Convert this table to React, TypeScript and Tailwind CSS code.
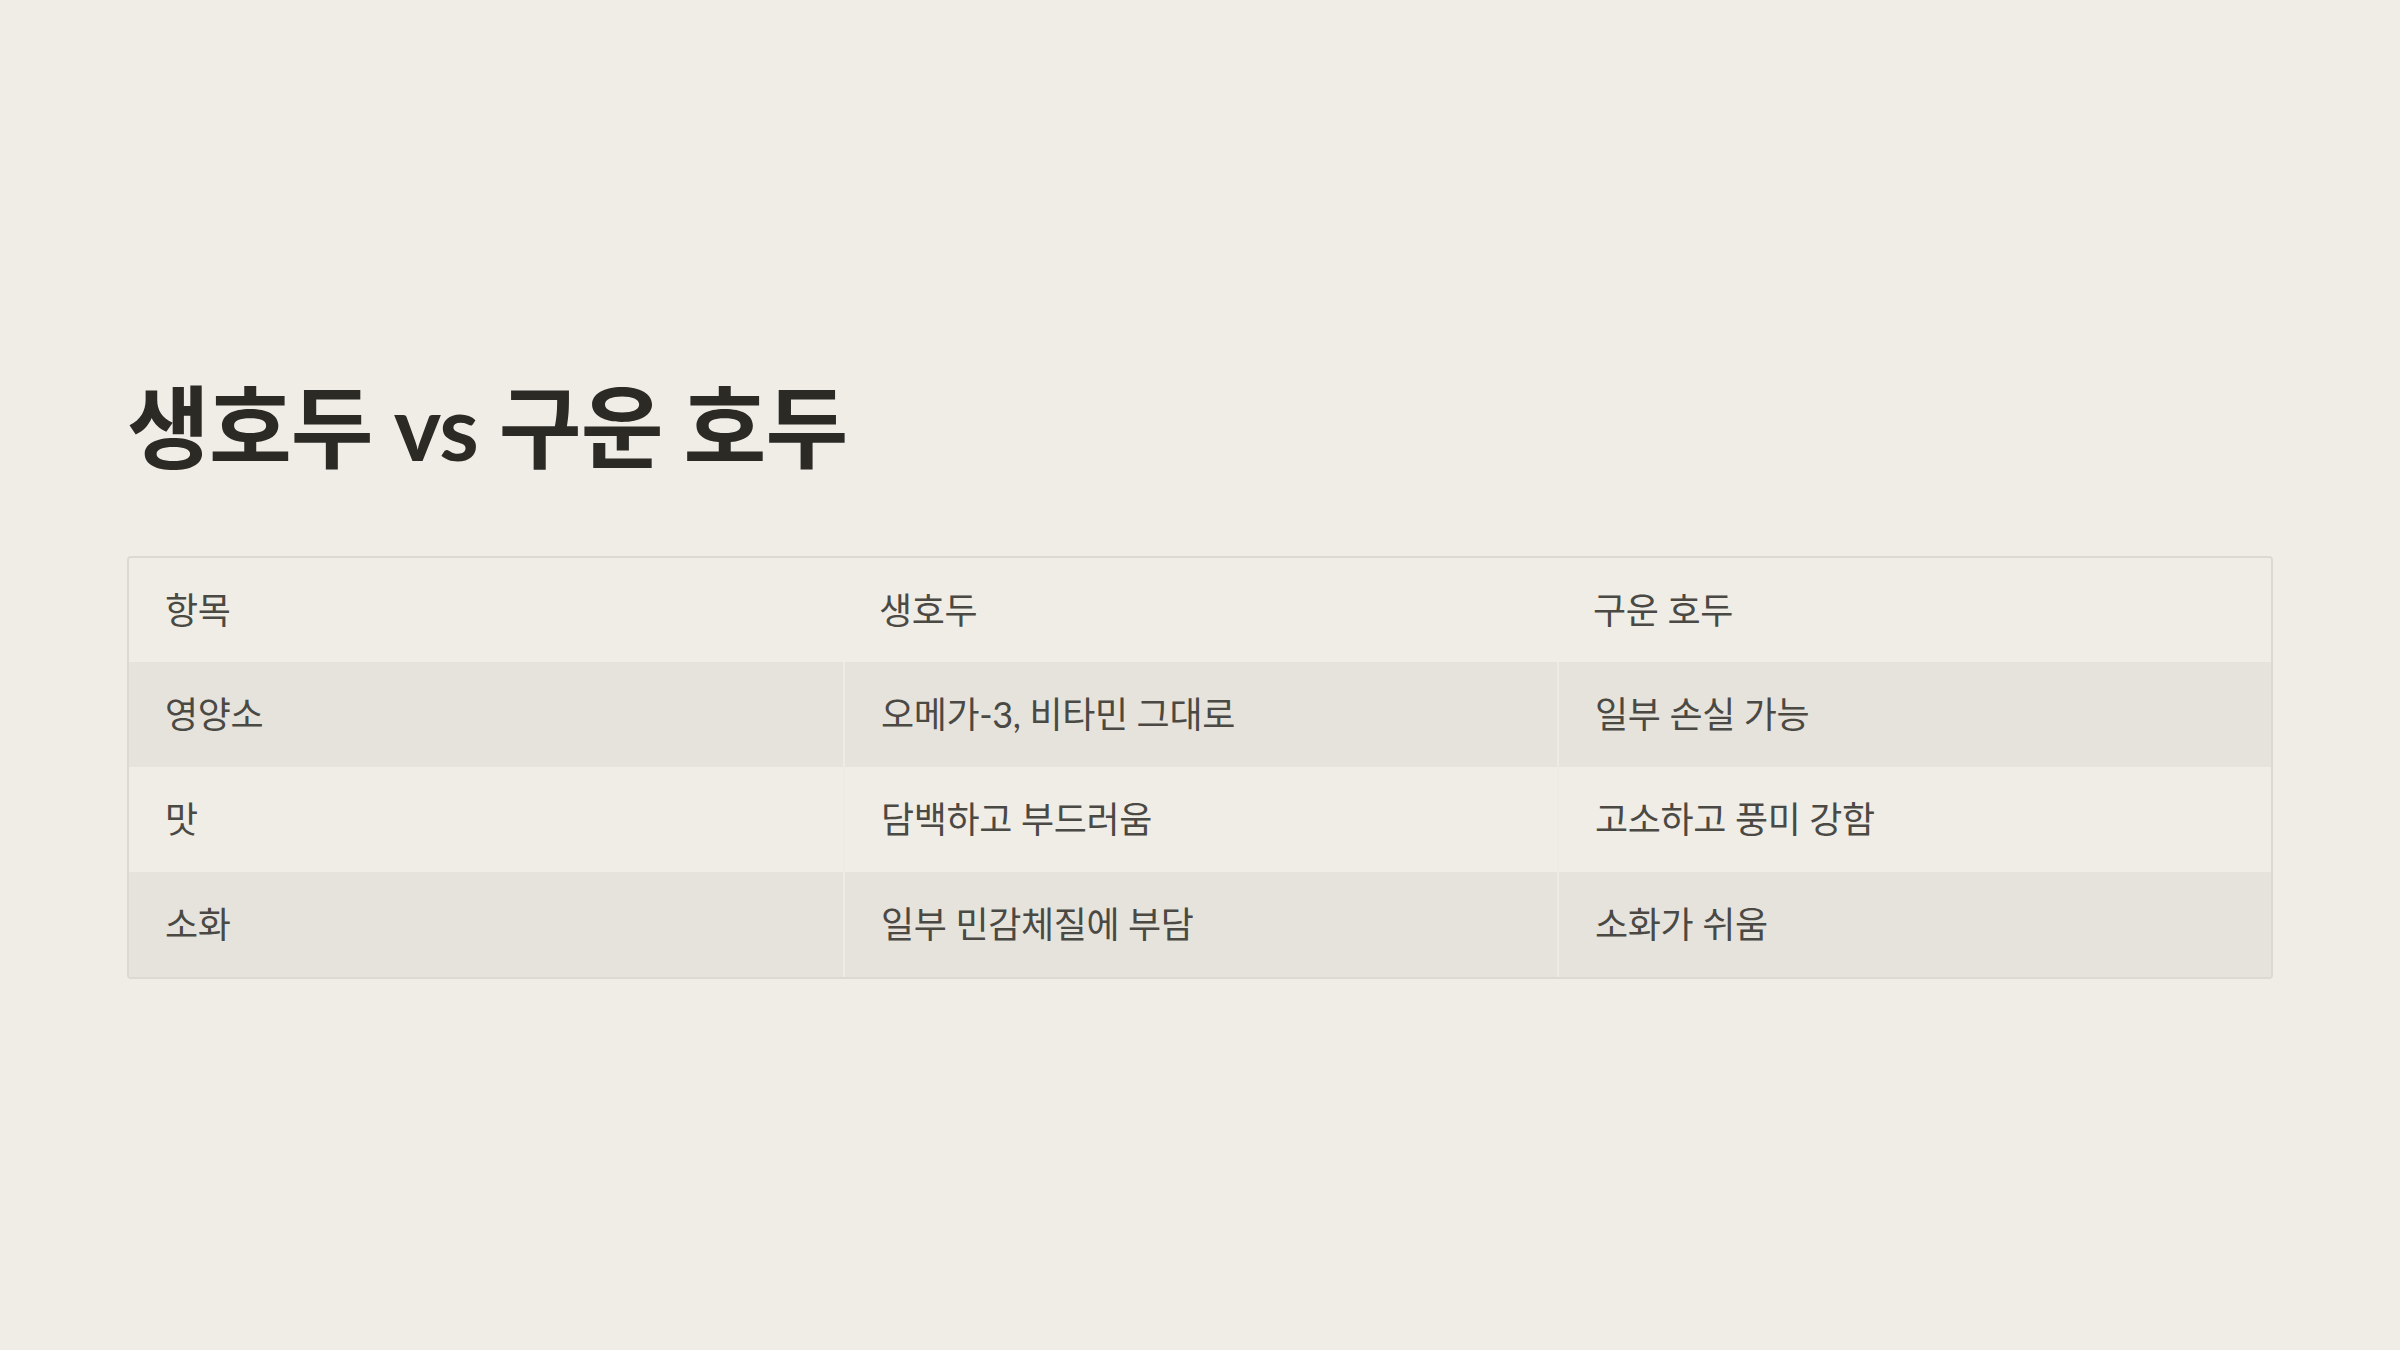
import React from "react";

const rows = [
  ["영양소", "오메가-3, 비타민 그대로", "일부 손실 가능"],
  ["맛", "담백하고 부드러움", "고소하고 풍미 강함"],
  ["소화", "일부 민감체질에 부담", "소화가 쉬움"],
];

export default function App() {
  return (
    <div
      className="min-h-screen w-full bg-[#f0ede7] flex flex-col justify-center px-[127px]"
      style={{ fontFamily: "Lato, 'Noto Sans CJK KR', sans-serif" }}
    >
      <h1 className="text-[90px] font-bold leading-[108px] tracking-[-0.01em] text-[#2b2a25]">
        생호두 vs 구운 호두
      </h1>
      <div className="mt-[76px] rounded-[4px] border-2 border-[#dcd9d2] overflow-hidden">
        <div className="grid grid-cols-3 bg-[#f0ede7]">
          {["항목", "생호두", "구운 호두"].map((h) => (
            <div
              key={h}
              className="px-[36px] py-[25px] text-[36px] leading-[54px] tracking-[-0.01em] text-[#4a4944]"
            >
              {h}
            </div>
          ))}
        </div>
        {rows.map((r, i) => (
          <div
            key={i}
            className={`grid grid-cols-3 ${i % 2 === 0 ? "bg-[#e6e3dc]" : "bg-[#f0ede7]"}`}
          >
            {r.map((c, j) => (
              <div
                key={j}
                className={`px-[36px] py-[25px] text-[36px] leading-[55px] tracking-[-0.01em] text-[#4a4944] ${
                  j > 0 ? "border-l-2 border-[#eeebe5]" : ""
                }`}
              >
                {c}
              </div>
            ))}
          </div>
        ))}
      </div>
    </div>
  );
}
